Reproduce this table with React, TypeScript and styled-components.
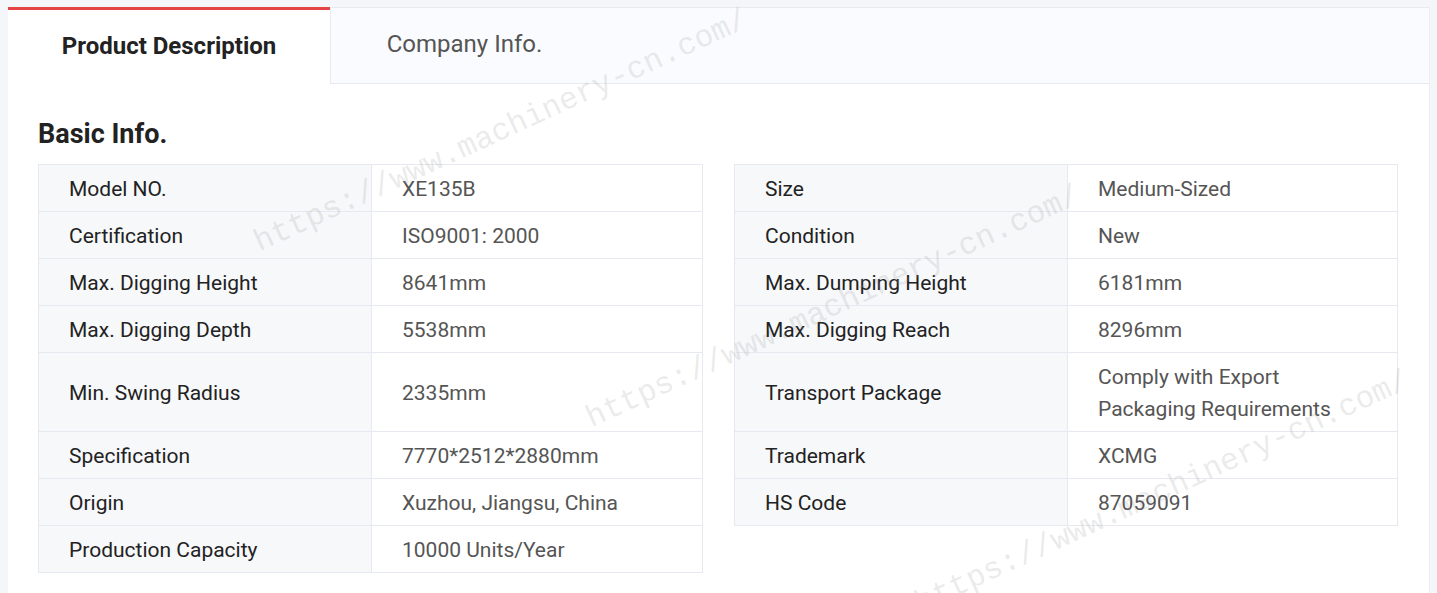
import React from "react";
import styled, { createGlobalStyle } from "styled-components";

const Global = createGlobalStyle`
  html, body { margin: 0; padding: 0; background: #f5f6f9; }
  body { font-family: Roboto, "Liberation Sans", Arial, sans-serif; overflow: hidden; }
`;

const Page = styled.div`
  position: relative;
  height: 593px;
  overflow: hidden;
  padding: 7px 7px 0 8px;
  box-sizing: border-box;
`;

const Card = styled.div`
  background: #fff;
  height: 100%;
  border-right: 1px solid #eceef2;
  display: flex;
  flex-direction: column;
`;

const Tabs = styled.div`
  display: flex;
  height: 77px;
`;

const Tab = styled.div<{ $active?: boolean }>`
  box-sizing: border-box;
  display: flex;
  align-items: center;
  justify-content: center;
  font-size: 24px;
  ${(p) =>
    p.$active
      ? `
    width: 322px;
    border-top: 3px solid #e64545;
    background: #fff;
    color: #222;
    font-weight: 700;
    padding-bottom: 2px;
  `
      : `
    flex: 0 0 auto;
    width: 268px;
    background: #fafbfe;
    color: #555;
    font-weight: 400;
    border-top: 1px solid #e8eaef;
    border-left: 1px solid #e8eaef;
    border-bottom: 1px solid #e8eaef;
    padding-bottom: 4px;
  `}
`;

const TabFill = styled.div`
  flex: 1;
  background: #fafbfe;
  border-top: 1px solid #e8eaef;
  border-bottom: 1px solid #e8eaef;
`;

const Content = styled.div`
  padding: 34px 31px 0 30px;
`;

const Heading = styled.h2`
  margin: 0 0 13px;
  font-size: 27px;
  font-weight: 700;
  color: #222;
  line-height: 33px;
`;

const Grid = styled.div`
  display: grid;
  grid-template-columns: 334px 331px 31px 334px 330px;
`;

const Cell = styled.div<{ $label?: boolean; $top?: boolean }>`
  box-sizing: border-box;
  display: flex;
  align-items: center;
  padding: 8px 20px 6px 30px;
  font-size: 21px;
  line-height: 32px;
  border-bottom: 1px solid #e6eaf0;
  border-top: ${(p) => (p.$top ? "1px solid #e6eaf0" : "none")};
  ${(p) =>
    p.$label
      ? `background: #f7f8fa; color: #222; border-left: 1px solid #e6eaf0; border-right: 1px solid #e6eaf0;`
      : `background: #fff; color: #555; border-right: 1px solid #e6eaf0;`}
`;

const Blank = styled.div``;

const Watermark = styled.div`
  position: absolute;
  pointer-events: none;
  font-family: "Liberation Mono", "DejaVu Sans Mono", monospace;
  font-size: 31px;
  color: rgba(150, 150, 150, 0.2);
  white-space: nowrap;
  transform: translate(-50%, -50%) rotate(-24.7deg);
`;

type Pair = [string, React.ReactNode] | null;

const rows: [Pair, Pair][] = [
  [["Model NO.", "XE135B"], ["Size", "Medium-Sized"]],
  [["Certification", "ISO9001: 2000"], ["Condition", "New"]],
  [["Max. Digging Height", "8641mm"], ["Max. Dumping Height", "6181mm"]],
  [["Max. Digging Depth", "5538mm"], ["Max. Digging Reach", "8296mm"]],
  [
    ["Min. Swing Radius", "2335mm"],
    [
      "Transport Package",
      <>
        Comply with Export
        <br />
        Packaging Requirements
      </>,
    ],
  ],
  [["Specification", "7770*2512*2880mm"], ["Trademark", "XCMG"]],
  [["Origin", "Xuzhou, Jiangsu, China"], ["HS Code", "87059091"]],
  [["Production Capacity", "10000 Units/Year"], null],
];

function PairCells({ pair, top }: { pair: Pair; top: boolean }) {
  if (!pair) {
    return (
      <>
        <Blank />
        <Blank />
      </>
    );
  }
  return (
    <>
      <Cell $label $top={top}>
        {pair[0]}
      </Cell>
      <Cell $top={top}>{pair[1]}</Cell>
    </>
  );
}

const marks = [
  { x: 501, y: 131 },
  { x: 833, y: 307 },
  { x: 1162, y: 492 },
];

export default function App() {
  return (
    <>
      <Global />
      <Page>
        <Card>
          <Tabs>
            <Tab $active>Product Description</Tab>
            <Tab>Company Info.</Tab>
            <TabFill />
          </Tabs>
          <Content>
            <Heading>Basic Info.</Heading>
            <Grid>
              {rows.map(([l, r], i) => (
                <React.Fragment key={i}>
                  <PairCells pair={l} top={i === 0} />
                  <Blank />
                  <PairCells pair={r} top={i === 0} />
                </React.Fragment>
              ))}
            </Grid>
          </Content>
        </Card>
        {marks.map((m, i) => (
          <Watermark key={i} style={{ left: m.x, top: m.y }}>
            https://www.machinery-cn.com/
          </Watermark>
        ))}
      </Page>
    </>
  );
}
